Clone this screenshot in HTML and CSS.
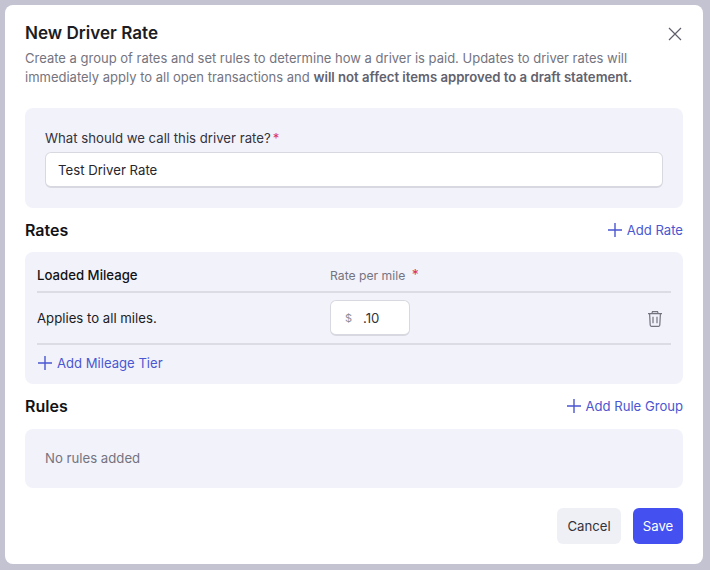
FILE: index.html
```html
<!DOCTYPE html>
<html lang="en">
<head>
    <meta charset="UTF-8">
    <title>New Driver Rate</title>
    <link rel="stylesheet" href="styles.css">
</head>
<body>
    <div class="modal">
        <header class="modal-header">
            <h1>New Driver Rate</h1>
            <button class="close-btn" aria-label="Close">
                <svg width="14" height="14" viewBox="0 0 14 14" fill="none" stroke="#5f5f6b" stroke-width="1.2"><path d="M1 1l12 12M13 1L1 13"/></svg>
            </button>
        </header>
        <p class="intro">Create a group of rates and set rules to determine how a driver is paid. Updates to driver rates will immediately apply to all open transactions and <strong>will not affect items approved to a draft statement.</strong></p>

        <div class="panel name-panel">
            <label class="field-label" for="rate-name">What should we call this driver rate?<span class="req">*</span></label>
            <input class="text-input" id="rate-name" value="Test Driver Rate">
        </div>

        <div class="section-head rates-head">
            <h2>Rates</h2>
            <a class="add-link">
                <svg width="16" height="16" viewBox="0 0 16 16" fill="none" stroke="#4a57d1" stroke-width="1.4"><path d="M8 1v14M1 8h14"/></svg>
                Add Rate
            </a>
        </div>

        <div class="panel rates-panel">
            <div class="rate-row rate-top">
                <div class="rate-name">Loaded Mileage</div>
                <div class="rate-col-label">Rate per mile <span class="req">*</span></div>
            </div>
            <div class="rate-row rate-item">
                <div class="rate-desc">Applies to all miles.</div>
                <div class="money-input"><span class="dollar">$</span><span class="amount">.10</span></div>
                <button class="trash-btn" aria-label="Delete">
                    <svg width="16" height="17" viewBox="0 0 16 17" fill="none" stroke="#74747f" stroke-width="1.2"><path d="M1 3.6h14M4.8 3.6l.7-2h5l.7 2M2.6 3.6l.6 11.5c0 .7.5 1.2 1.1 1.2h7.4c.6 0 1.1-.5 1.1-1.2l.6-11.5M6 6.8v6.4M10 6.8v6.4"/></svg>
                </button>
            </div>
            <a class="add-link tier-link">
                <svg width="16" height="16" viewBox="0 0 16 16" fill="none" stroke="#4a57d1" stroke-width="1.4"><path d="M8 1v14M1 8h14"/></svg>
                Add Mileage Tier
            </a>
        </div>

        <div class="section-head rules-head">
            <h2>Rules</h2>
            <a class="add-link">
                <svg width="16" height="16" viewBox="0 0 16 16" fill="none" stroke="#4a57d1" stroke-width="1.4"><path d="M8 1v14M1 8h14"/></svg>
                Add Rule Group
            </a>
        </div>

        <div class="panel rules-panel">No rules added</div>

        <footer class="modal-footer">
            <button class="btn btn-cancel">Cancel</button>
            <button class="btn btn-save">Save</button>
        </footer>
    </div>
</body>
</html>
```

FILE: styles.css
```css
* {
    box-sizing: border-box;
    margin: 0;
    padding: 0;
}

body {
    background-color: #c3c3d1;
    font-family: Inter, sans-serif;
    padding: 5px 7px 6px 5px;
    height: 570px;
    overflow: hidden;
}

.modal {
    background-color: white;
    border-radius: 8px;
    height: 559px;
    padding: 16px 20px 20px;
}

.modal-header {
    display: flex;
    justify-content: space-between;
    align-items: center;
    height: 24px;
}

.modal-header h1 {
    font-size: 17.1px;
    line-height: 24px;
    font-weight: 600;
    color: #1c1c22;
}

.close-btn {
    background: none;
    border: none;
    display: flex;
    margin-top: 2px;
    margin-right: 1px;
}

.intro {
    margin-top: 4px;
    font-size: 13px;
    line-height: 19px;
    color: #74747f;
}

.intro strong {
    font-size: 13.15px;
    font-weight: 600;
    color: #62626e;
}

.panel {
    background-color: #f2f2fb;
    border-radius: 8px;
}

.name-panel {
    margin-top: 21px;
    height: 100px;
    padding: 20px;
}

.field-label {
    display: block;
    font-size: 13.2px;
    line-height: 20px;
    font-weight: 400;
    color: #33333b;
}

.req {
    color: #d9325c;
    margin-left: 2px;
}

.text-input {
    display: block;
    width: 100%;
    height: 36px;
    margin-top: 4px;
    padding: 0 12px;
    border: 1px solid #d8d8e0;
    border-bottom-width: 2px;
    border-radius: 6px;
    background-color: white;
    font-family: Inter, sans-serif;
    font-size: 13.2px;
    color: #26262c;
}

.section-head {
    display: flex;
    justify-content: space-between;
    align-items: center;
    height: 22px;
}

.rates-head {
    margin-top: 11px;
    margin-bottom: 11px;
}

.rules-head {
    margin-top: 11px;
    margin-bottom: 12px;
}

.section-head h2 {
    font-size: 16px;
    font-weight: 600;
    color: #121216;
}

.add-link {
    display: flex;
    align-items: center;
    gap: 4px;
    font-size: 13.1px;
    color: #4a57d1;
}

.rates-panel {
    height: 132px;
    padding: 0 12px;
}

.rate-row {
    display: flex;
    align-items: center;
    border-bottom: 2px solid #dcdce4;
}

.rate-top {
    height: 41px;
    padding-top: 6px;
}

.rate-item {
    height: 52px;
}

.rate-name {
    width: 293px;
    font-size: 13.2px;
    font-weight: 500;
    color: #121216;
}

.rate-col-label {
    font-size: 12.2px;
    color: #74747f;
}

.rate-col-label .req {
    margin-left: 3px;
    font-size: 14px;
}

.rate-desc {
    width: 293px;
    font-size: 13.2px;
    color: #1c1c22;
}

.money-input {
    display: flex;
    align-items: center;
    width: 80px;
    height: 36px;
    padding-left: 14px;
    background-color: white;
    border: 1px solid #d8d8e0;
    border-bottom-width: 2px;
    border-radius: 6px;
    font-size: 13.2px;
}

.dollar {
    font-size: 11px;
    color: #8e8e99;
    width: 18px;
}

.amount {
    color: #33333b;
}

.trash-btn {
    background: none;
    border: none;
    display: flex;
    margin-left: auto;
    margin-right: 8px;
}

.tier-link {
    height: 36px;
}

.rules-panel {
    height: 59px;
    padding: 0 20px 2px;
    display: flex;
    align-items: center;
    font-size: 13.2px;
    color: #74747f;
}

.modal-footer {
    display: flex;
    justify-content: flex-end;
    gap: 12px;
    margin-top: 20px;
}

.btn {
    height: 36px;
    border: none;
    border-radius: 6px;
    font-family: Inter, sans-serif;
    font-size: 13.2px;
}

.btn-cancel {
    width: 64px;
    background-color: #efeff6;
    color: #33333b;
}

.btn-save {
    width: 50px;
    background-color: #4450ef;
    color: white;
}
```
